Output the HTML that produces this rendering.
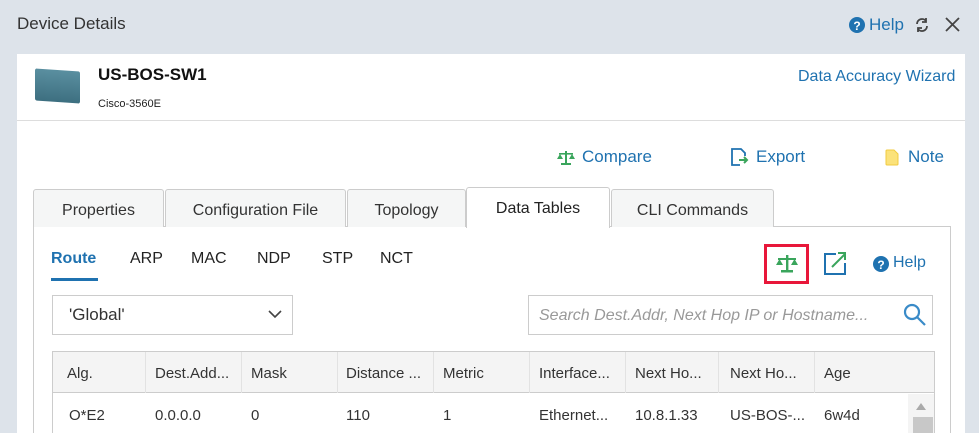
<!DOCTYPE html>
<html><head><meta charset="utf-8"><style>
*{box-sizing:border-box;margin:0;padding:0}
html,body{width:979px;height:433px;overflow:hidden}
body{background:#dde3ea;font-family:"Liberation Sans",sans-serif;position:relative;color:#222}
.a{position:absolute;white-space:nowrap}
.blue{color:#1f72b0}
.tab{position:absolute;top:189px;height:38px;background:#f5f6f6;border:1px solid #ccc;border-bottom:none;border-radius:3px 3px 0 0;font-size:16px;color:#333;text-align:center;line-height:41px}
.th{position:absolute;top:352px;height:41px;border-right:1px solid #e2e2e2;font-size:15px;line-height:43px;padding-left:14px;color:#333}
.td{position:absolute;top:394px;font-size:15px;line-height:44px;padding-left:14px;color:#333}
</style></head><body>
<div class="a" style="left:17px;top:14px;font-size:17px;color:#333">Device Details</div>
<svg class="a" style="left:849px;top:17px" width="16" height="16"><circle cx="8" cy="8" r="8" fill="#1f72b0"/><text x="8" y="13" font-size="12" font-weight="bold" fill="#fff" text-anchor="middle" font-family="Liberation Sans">?</text></svg>
<div class="a blue" style="left:869px;top:15px;font-size:17px">Help</div>
<svg class="a" style="left:914px;top:17px" width="16" height="16" fill="none" stroke="#444" stroke-width="1.8"><path d="M3 7 A5 5 0 0 1 12 4 M13 9 A5 5 0 0 1 4 12"/><path d="M12 1v4h-4M4 15v-4h4"/></svg>
<svg class="a" style="left:945px;top:17px" width="15" height="15" stroke="#444" stroke-width="1.8"><path d="M1 1L14 14M14 1L1 14"/></svg>

<div class="a" style="left:17px;top:54px;width:948px;height:379px;background:#fff"></div>
<div class="a" style="left:17px;top:120px;width:948px;height:1px;background:#ddd"></div>
<div class="a" style="left:35px;top:70px;width:45px;height:32px;background:linear-gradient(#5a8fa0,#3d6f80);border-radius:2px;transform:skewY(4deg)"></div>
<div class="a" style="left:98px;top:65px;font-size:17px;font-weight:bold;color:#111">US-BOS-SW1</div>
<div class="a" style="left:98px;top:98px;font-size:11px;color:#222">Cisco-3560E</div>
<div class="a blue" style="left:798px;top:68px;font-size:16px">Data Accuracy Wizard</div>

<svg class="a" style="left:557px;top:150px" width="18" height="15" fill="#3aa55c"><rect x="8" y="1" width="2" height="12"/><rect x="2" y="3" width="14" height="1.6"/><rect x="4" y="13" width="10" height="2"/><path d="M0 9h6l-3-5zM12 9h6l-3-5z"/></svg>
<div class="a blue" style="left:582px;top:147px;font-size:17px">Compare</div>
<svg class="a" style="left:730px;top:148px" width="19" height="19" fill="none" stroke="#1f72b0" stroke-width="1.8"><path d="M10 17H2V1h9l4 4v3"/><path d="M9 12h8M14 9l3 3-3 3" stroke="#3aa55c" stroke-width="2"/></svg>
<div class="a blue" style="left:756px;top:147px;font-size:17px">Export</div>
<svg class="a" style="left:885px;top:149px" width="14" height="17"><path d="M1 2a1 1 0 0 1 1-1h7l4 4v10a1 1 0 0 1-1 1H2a1 1 0 0 1-1-1z" fill="#fbe27a" stroke="#f0cb40"/></svg>
<div class="a blue" style="left:908px;top:147px;font-size:17px">Note</div>

<div class="a" style="left:33px;top:226px;width:918px;height:207px;border:1px solid #ccc;border-bottom:none"></div>
<div class="tab" style="left:33px;width:131px">Properties</div>
<div class="tab" style="left:165px;width:181px">Configuration File</div>
<div class="tab" style="left:347px;width:119px">Topology</div>
<div class="tab" style="left:466px;top:187px;width:144px;height:41px;background:#fff;color:#222">Data Tables</div>
<div class="tab" style="left:611px;width:163px">CLI Commands</div>

<div class="a" style="left:51px;top:250px;font-size:16px;font-weight:bold;color:#1f72b0">Route</div>
<div class="a" style="left:51px;top:278px;width:47px;height:3px;background:#1f72b0"></div>
<div class="a" style="left:130px;top:250px;font-size:16px">ARP</div>
<div class="a" style="left:191px;top:250px;font-size:16px">MAC</div>
<div class="a" style="left:257px;top:250px;font-size:16px">NDP</div>
<div class="a" style="left:322px;top:250px;font-size:16px">STP</div>
<div class="a" style="left:380px;top:250px;font-size:16px">NCT</div>

<div class="a" style="left:764px;top:244px;width:45px;height:40px;border:3px solid #e8173a"></div>
<svg class="a" style="left:776px;top:254px" width="22" height="19" fill="#3aa55c"><rect x="10" y="1" width="2.4" height="15"/><rect x="2" y="4" width="18" height="2"/><rect x="5" y="16" width="12" height="2.5"/><path d="M0 11h7l-3.5-6zM15 11h7l-3.5-6z"/></svg>
<svg class="a" style="left:823px;top:252px" width="24" height="23" fill="none" stroke="#1f72b0" stroke-width="2"><path d="M13 2H2v20h20V11"/><path d="M9 15L22 2M15 1h7v7" stroke="#3aa55c"/></svg>
<svg class="a" style="left:873px;top:256px" width="16" height="16"><circle cx="8" cy="8" r="8" fill="#1f72b0"/><text x="8" y="13" font-size="12" font-weight="bold" fill="#fff" text-anchor="middle" font-family="Liberation Sans">?</text></svg>
<div class="a blue" style="left:893px;top:254px;font-size:16px">Help</div>

<div class="a" style="left:52px;top:295px;width:241px;height:40px;border:1px solid #ccc;font-size:17px;line-height:38px;padding-left:16px;color:#333">'Global'</div>
<svg class="a" style="left:268px;top:310px" width="14" height="9" fill="none" stroke="#444" stroke-width="1.6"><path d="M1 1l6 6 6-6"/></svg>
<div class="a" style="left:528px;top:295px;width:405px;height:40px;border:1px solid #ccc;font-size:16px;line-height:39px;padding-left:10px;color:#999;font-style:italic">Search Dest.Addr, Next Hop IP or Hostname...</div>
<svg class="a" style="left:903px;top:303px" width="24" height="24" fill="none" stroke="#3a8bc8" stroke-width="2.2"><circle cx="9" cy="9" r="7"/><path d="M14 14l8 8"/></svg>

<div class="a" style="left:52px;top:351px;width:883px;height:82px;border:1px solid #ccc;border-bottom:none"></div>
<div class="a" style="left:53px;top:352px;width:881px;height:41px;background:#f4f4f4;border-bottom:1px solid #ccc"></div>
<div class="th" style="left:53px;width:93px">Alg.</div>
<div class="th" style="left:141px;width:101px">Dest.Add...</div>
<div class="th" style="left:237px;width:101px">Mask</div>
<div class="th" style="left:332px;width:102px">Distance ...</div>
<div class="th" style="left:429px;width:101px">Metric</div>
<div class="th" style="left:525px;width:101px">Interface...</div>
<div class="th" style="left:621px;width:98px">Next Ho...</div>
<div class="th" style="left:716px;width:99px">Next Ho...</div>
<div class="th" style="left:810px;width:98px;border-right:none">Age</div>
<div class="td" style="left:55px">O*E2</div>
<div class="td" style="left:141px">0.0.0.0</div>
<div class="td" style="left:237px">0</div>
<div class="td" style="left:332px">110</div>
<div class="td" style="left:429px">1</div>
<div class="td" style="left:525px">Ethernet...</div>
<div class="td" style="left:621px">10.8.1.33</div>
<div class="td" style="left:716px">US-BOS-...</div>
<div class="td" style="left:810px">6w4d</div>
<div class="a" style="left:908px;top:394px;width:26px;height:39px;background:#f4f4f4"></div>
<svg class="a" style="left:916px;top:403px" width="10" height="7"><path d="M0 7L5 0 10 7z" fill="#aaa"/></svg>
<div class="a" style="left:913px;top:417px;width:20px;height:16px;background:#c8c8c8"></div>
</body></html>
